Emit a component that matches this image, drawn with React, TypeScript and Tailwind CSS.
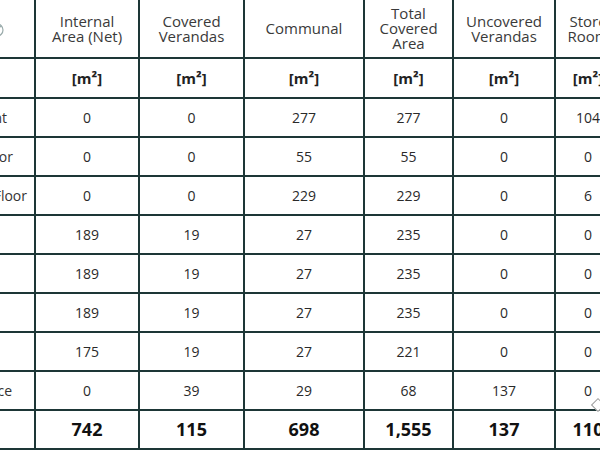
import React from "react";

//-------------------------Data-------------------------
const headers = [
    ["Internal", "Area (Net)"],
    ["Covered", "Verandas"],
    ["Communal"],
    ["Total", "Covered", "Area"],
    ["Uncovered", "Verandas"],
    ["Store", "Room"],
];

// pad = how far the (clipped) label ends from the first column's right line
const rows: { label: string; pad: string; values: string[] }[] = [
    { label: "Basement", pad: "pr-[27px]", values: ["0", "0", "277", "277", "0", "104"] },
    { label: "Ground Floor", pad: "pr-[21px]", values: ["0", "0", "55", "55", "0", "0"] },
    { label: "Mezzanine Floor", pad: "pr-[7px]", values: ["0", "0", "229", "229", "0", "6"] },
    { label: "1st Floor", pad: "pr-[40px]", values: ["189", "19", "27", "235", "0", "0"] },
    { label: "2nd Floor", pad: "pr-[40px]", values: ["189", "19", "27", "235", "0", "0"] },
    { label: "3rd Floor", pad: "pr-[40px]", values: ["189", "19", "27", "235", "0", "0"] },
    { label: "4th Floor", pad: "pr-[40px]", values: ["175", "19", "27", "221", "0", "0"] },
    { label: "Roof Terrace", pad: "pr-[22px]", values: ["0", "39", "29", "68", "137", "0"] },
];

const totals = ["742", "115", "698", "1,555", "137", "110"];

const font = { fontFamily: '"Open Sans", "Liberation Sans", sans-serif' };

export default function App() {
    return (
        <div className="relative w-[600px] h-[450px] overflow-hidden bg-white" style={font}>
            <div className="grid w-max ml-[-126px] gap-[2px] pb-[2px] bg-[#1d3636] grid-cols-[160px_102px_103px_118px_87px_100px_64px] grid-rows-[57px_38px_repeat(9,37px)]">
                {/* header */}
                <div className="bg-white relative">
                    <svg className="absolute right-[29px] top-[22px]" width="16" height="16" viewBox="0 0 16 16">
                        <circle cx="8" cy="8" r="6" fill="none" stroke="#9aa" strokeWidth="1.2" />
                        <path d="M4 12 L12 4" stroke="#9aa" strokeWidth="1.2" />
                    </svg>
                </div>
                {headers.map((h, i) => (
                    <div key={i} className="bg-white flex flex-col items-center justify-center text-[15px] leading-[15px] text-[#3a3a3a] whitespace-nowrap overflow-hidden">
                        {h.map((line) => <span key={line}>{line}</span>)}
                    </div>
                ))}

                {/* units */}
                <div className="bg-white" />
                {headers.map((_, i) => (
                    <div key={i} className="bg-white flex items-center justify-center text-[15px] font-bold text-[#222]">
                        [m²]
                    </div>
                ))}

                {/* body */}
                {rows.map((r) => (
                    <React.Fragment key={r.label}>
                        <div className={`bg-white flex items-center justify-end overflow-hidden text-[14px] text-[#333] whitespace-nowrap ${r.pad}`}>
                            {r.label}
                        </div>
                        {r.values.map((v, i) => (
                            <div key={i} className="bg-white flex items-center justify-center text-[14px] text-[#2a2a2a]">
                                {v}
                            </div>
                        ))}
                    </React.Fragment>
                ))}

                {/* totals */}
                <div className="bg-white" />
                {totals.map((v, i) => (
                    <div key={i} className="bg-white flex items-center justify-center text-[18px] font-bold text-[#111]">
                        {v}
                    </div>
                ))}
            </div>
            <div className="absolute left-[593px] top-[400px] w-[10px] h-[10px] rotate-45 border border-[#999] bg-white" />
        </div>
    );
}
